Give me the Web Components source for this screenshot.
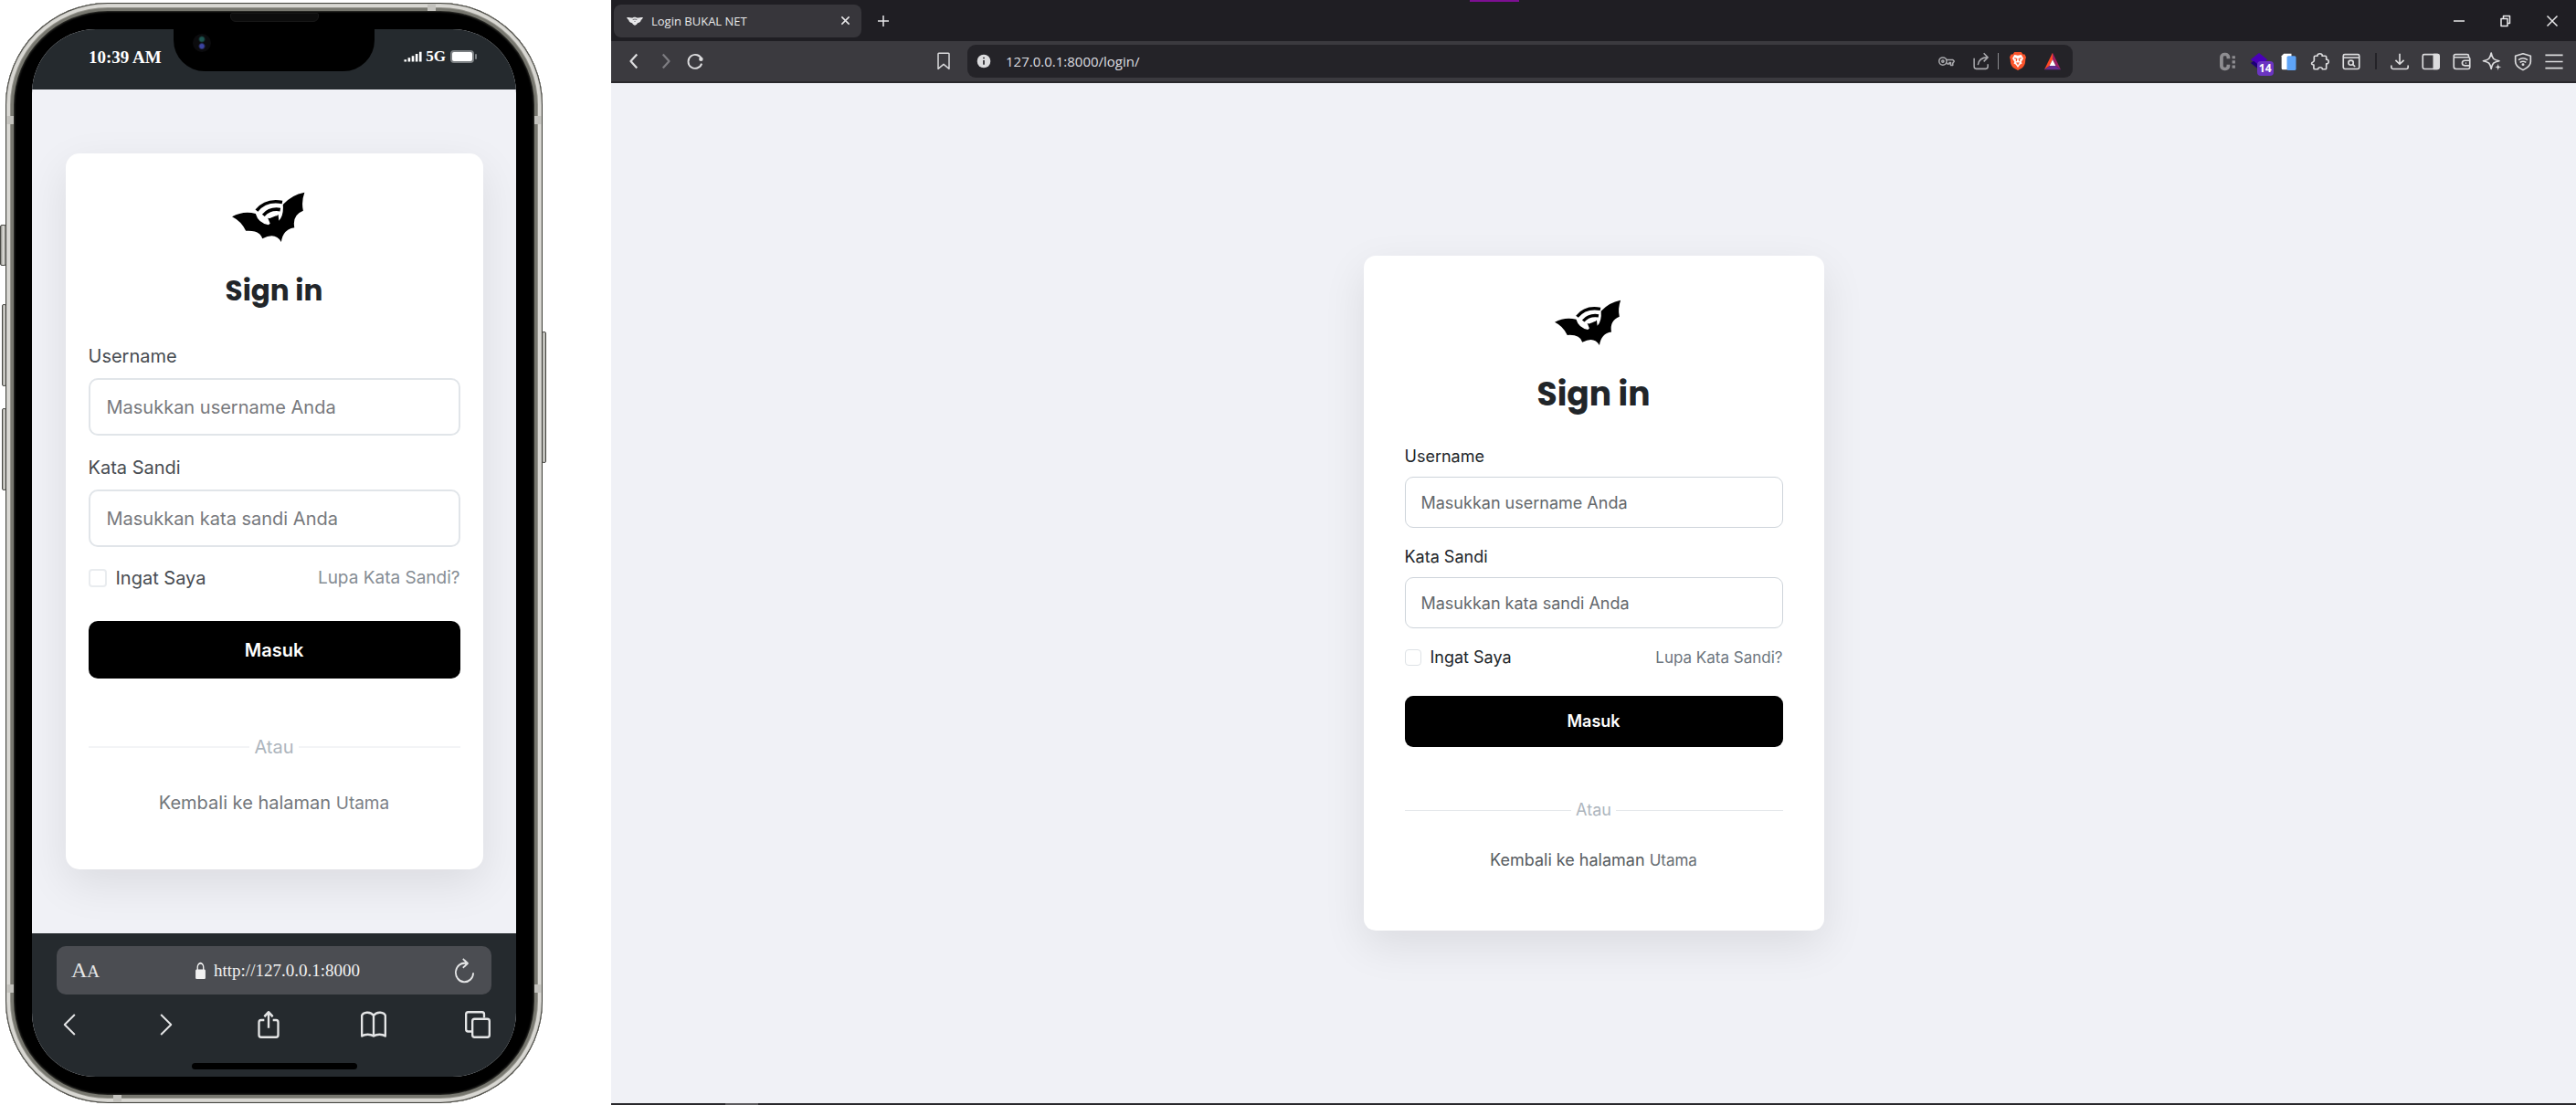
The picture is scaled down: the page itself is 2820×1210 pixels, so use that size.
<!DOCTYPE html>
<html lang="id">
<head>
<meta charset="utf-8">
<title>Login BUKAL NET</title>
<style>
html,body{margin:0;height:100%}
body{background:#fff;font-family:Inter,"Liberation Sans",sans-serif}
</style>
</head>
<body>
<device-showcase>
  <phone-frame slot="phone"><login-card compact></login-card></phone-frame>
  <browser-window slot="desktop"><login-card></login-card></browser-window>
</device-showcase>

<script>
const define = (name, html, after) => {
  const tpl = document.createElement('template');
  tpl.innerHTML = html;
  customElements.define(name, class extends HTMLElement {
    constructor() {
      super();
      this.attachShadow({ mode: 'open' }).append(tpl.content.cloneNode(true));
      if (after) after(this, this.shadowRoot);
    }
  });
};

/* 24-unit line icons, and a few filled ones */
const ICONS = {
  back: '<path d="M15 2 6 12l9 10"/>',
  forward: '<path d="M9 2l9 10-9 10"/>',
  prev: '<path d="M22 1 3 12l19 11" vector-effect="non-scaling-stroke"/>',
  next: '<path d="M2 1l19 11L2 23" vector-effect="non-scaling-stroke"/>',
  reload: '<path d="M21.5 9.5A10 10 0 1 0 21.500 15.500"/><circle cx="20.500" cy="9" r="3" fill="currentColor" stroke="none"/>',
  bookmark: '<path d="M5 1.500h14a1 1 0 0 1 1 1V22l-8-6-8 6V2.500a1 1 0 0 1 1-1z"/>',
  info: '<circle cx="12" cy="12" r="11" fill="currentColor" stroke="none"/><path d="M12 10.500v7M12 5.500v2.500" stroke="#242328" stroke-width="2.500"/>',
  key: '<circle cx="6.500" cy="12" r="5.500"/><circle cx="6.500" cy="12" r="1.500"/><path d="M12 10h9l2 2-2 3v3h-3v-4h-2v2h-3l-1-2"/>',
  share: '<path d="M1.500 8v11a3 3 0 0 0 3 3h14a3 3 0 0 0 3-3v-3M7 17C8 10 13 7 21 7M15.500 1.500 21.500 7 15.500 12.500"/>',
  puzzle: '<path d="M4 5.500C4 4.500 4.500 4 5.500 4H8.500C7.500 0 15.500 0 14.500 4H18.500C19.500 4 20 4.500 20 5.500V9C24 8.500 24 15.500 20 15V21C20 22 19.500 22.500 18.500 22.500H15C14.500 19 9.500 19 9 22.500H5C4 22.500 3.500 22 3.500 21V16.500C-.5 16 .5 13 2.500 12.500 3.500 12 4 11.500 4 10.500z"/>',
  find: '<rect x="1.500" y="2" width="21" height="20" rx="2"/><path d="M2 6.500h20"/><circle cx="11.500" cy="13.500" r="3.200"/><path d="m14 16 3 3"/>',
  download: '<path d="M12 1v14M6.500 10l5.500 5.500 5.500-5.500M1 17v2.500A2.500 2.500 0 0 0 3.500 22h17a2.500 2.500 0 0 0 2.500-2.500V17"/>',
  panel: '<rect x="1.500" y="2" width="21" height="20" rx="2"/><path d="M16 2h5a2 2 0 0 1 2 2v16a2 2 0 0 1-2 2h-5z" fill="currentColor"/>',
  wallet: '<path d="M1.500 6v13a3 3 0 0 0 3 3h16a2 2 0 0 0 2-2V8a2 2 0 0 0-2-2H3a1.500 1.500 0 0 1-1.500-2A2 2 0 0 1 3.500 2H19a2 2 0 0 1 2 2v2M22 10.500h-6a3.500 3.500 0 0 0 0 7h6M17 14h1"/>',
  sparkle: '<path d="M11 0c1.500 8 3 9.500 10.500 11-7.500 1.500-9 3-10.500 11C9.500 14 8 12.500.5 11 8 9.500 9.500 8 11 0z"/><path d="M20 14.500c.5 4 1 4.500 4.500 5-3.500.5-4 1-4.500 5-.5-4-1-4.500-4.500-5 3.500-.5 4-1 4.500-5z" fill="currentColor" stroke="none"/>',
  shield: '<path d="M12 1 22 4v8c0 5-4 8.500-10 11.500C6 20.500 2 17 2 12V4z"/><path d="M6 9.500c4-3 8-3 12 0M8 13c3-2 5-2 8 0"/><circle cx="12" cy="16" r="1.800" fill="currentColor" stroke="none"/>',
  menu: '<path d="M.5 3h23M.5 12h23M.5 21h23"/>',
  minimize: '<path d="M0 12h24"/>',
  restore: '<path d="M2 7h14v16H2zM7 7V1h14v16h-5"/>',
  close: '<path d="M1 1l22 22M23 1 1 23"/>',
  plus: '<path d="M12 0v24M0 12h24"/>',
  tabfav: '<path d="M0 5c4 0 6 1 9 1 0-2 5-2 6 0 3 0 5-1 9-1-1 3-2 4-3 5 0 3-2 5-5 6-1 3-3 4-4 4s-3-1-4-4c-3-1-5-3-5-6-1-1-2-2-3-5z" fill="currentColor" stroke="none"/><path d="M9 10c1-2 5-2 6 0M11 13h2" stroke="#77767c" stroke-width="1.500"/>',
  brave: '<path d="M12 0h5l2.500 3L22 3l2 4-1 3c0 6-2 9-5 11l-6 3-6-3C3 19 1 16 1 10L0 7l2-4 2.500 0L7 0z" fill="#fb542b" stroke="none"/><path d="M12 4.500l5-1 3 5-3 4.500 1 2-3 1.500-3 4-3-4L6 15l1-2-3-4.500 3-5z" fill="#fff" stroke="none"/><path d="M7 8l3.500 1-1 3M17 8l-3.500 1 1 3M10 14l2 1 2-1M12 15v2" stroke="#fb542b" stroke-width="1.500"/>',
  bat: '<path d="M12 1 0 23l7.500-5L12 10z" fill="#ff4724" stroke="none"/><path d="M12 1l12 22-7.500-5L12 10z" fill="#9e1f63" stroke="none"/><path d="M0 23h24l-7.500-5h-9z" fill="#662d91" stroke="none"/><path d="M12 10l4.500 8h-9z" fill="#fff" stroke="none"/>',
  colon: '<path d="M12.500 8V6a4 4 0 0 0-4-4h-1a4 4 0 0 0-4 4v12a4 4 0 0 0 4 4h1a4 4 0 0 0 4-4v-2" stroke-width="4.500"/><path d="M19.500 4v17" stroke-width="4" stroke-dasharray="4 2.500"/>',
  layers: '<path d="M12 0l11 9-11 9L1 9z" fill="#4a00b8" stroke="none"/><path d="M1 14l4-3 7 6v6z" fill="#1d0075" stroke="none"/>',
  copy: '<path d="M5 1h10v22H4a2 2 0 0 1-2-2V4z" fill="#fff" stroke="none"/><rect x="9" y="4" width="12" height="20" rx="2" fill="#5ea4f8" stroke="none"/>',
  signal: '<path d="M1 17.500v4M6.500 14v7.500M12 10.500v11M17.500 7v14.500M23 3v18.500" stroke-width="3.500"/>',
  lock: '<path d="M6 11V7a6 6 0 0 1 12 0v4" stroke-width="2.500"/><rect x="2" y="10" width="20" height="14" rx="2" fill="currentColor" stroke="none"/>',
  again: '<path d="M14 4.500A11 9.500 0 1 0 23 14M10 0l6 4.500L10 9"/>',
  export: '<path d="M8 8H5a2 2 0 0 0-2 2v11a2 2 0 0 0 2 2h14a2 2 0 0 0 2-2V10a2 2 0 0 0-2-2h-3M12 15V1M8 5l4-4 4 4"/>',
  book: '<path d="M12 4C9 0 2 1 1 4v18c3-2 8-2 11 0 3-2 8-2 11 0V4c-1-3-8-4-11 0zM12 4v18"/>',
  tabs: '<rect x="7" y="7" width="16" height="16" rx="2"/><path d="M6 18H3a2 2 0 0 1-2-2V3a2 2 0 0 1 2-2h13a2 2 0 0 1 2 2v3"/>'
};

customElements.define('line-icon', class extends HTMLElement {
  constructor() { super(); this.attachShadow({ mode: 'open' }); }
  connectedCallback() {
    this.shadowRoot.innerHTML = `<style>:host{display:block;flex:none;width:20px;height:20px}svg{display:block;width:100%;height:100%;overflow:visible}</style>
    <svg viewBox="0 0 24 24" preserveAspectRatio="none" fill="none" stroke="currentColor" stroke-width="${this.getAttribute('weight') || 2}" stroke-linejoin="round" aria-hidden="true">${ICONS[this.getAttribute('name')]}</svg>`;
  }
});

define('bat-logo', `
<style>:host{display:block}svg{display:block;height:100%;margin:auto}</style>
<svg viewBox="68 55 215 149" role="img" aria-label="BUKAL NET">
  <path d="M68 129Q102 110 138 120Q146 148 176 153L181 149L174 132Q178 135 182 133Q191 130 197 127Q202 127 205 122L207 141Q222 125 219 93Q245 64 283 57Q273 85 279 111Q246 124 253 161Q219 166 214 204Q197 174 158 194Q150 168 109 171Q95 142 68 129Z"/>
  <path d="M141 111Q168 77 217 86M161 125Q180 103 211 108" fill="none" stroke="#000" stroke-width="10"/>
</svg>`);

define('text-field', `
<style>
:host{display:flex;flex-direction:column;gap:var(--label-gap)}
label{color:var(--label);font-weight:400;font-size:var(--text);line-height:var(--line)}
input{box-sizing:border-box;width:100%;height:var(--control);padding:0 var(--inset);border:var(--edge-width) solid var(--edge);border-radius:var(--control-radius);
  font:400 var(--text)/var(--line) Inter,"Liberation Sans",sans-serif;color:#212529;background:#fff;outline:none}
input::placeholder{color:var(--placeholder);opacity:1}
</style>
<label for="f"></label><input id="f">`, (host, root) => {
  root.querySelector('label').textContent = host.getAttribute('label');
  const i = root.querySelector('input');
  i.type = host.getAttribute('type'); i.placeholder = host.getAttribute('placeholder');
});

define('or-divider', `
<style>
:host{display:flex;align-items:center;gap:5px;color:#adb5bd}
i{flex:1;height:var(--edge-width);background:var(--rule)}
</style><i></i><slot></slot><i></i>`);

define('login-card', `
<style>
:host{
  --text:18px;--line:24px;--link:17px;--title:36px;--title-line:44px;--control:56px;--control-radius:9px;--inset:17px;
  --label-gap:10px;--edge-width:1px;--edge:#ced4da;--rule:#e5e8eb;--label:#212529;--placeholder:#64686c;--muted:#6c757d;--soft:#565b60;--home:#666c72;
  --logo:50px;--pad-x:45px;
  box-sizing:border-box;display:block;width:504px;max-width:100%;background:#fff;border-radius:13px;
  box-shadow:0 16px 48px rgba(0,0,0,.09);padding:48px var(--pad-x) 65px;font-size:var(--text);line-height:var(--line)}
:host([compact]){
  --text:20px;--line:26px;--link:19px;--title:31px;--title-line:38px;--control:63px;--control-radius:10px;--inset:18px;
  --label-gap:11px;--edge-width:2px;--edge:#e1e5e9;--rule:#f3f4f6;--label:#474c51;--placeholder:#77797d;--muted:#868d94;--soft:#72767a;--home:#7b8086;
  --logo:55px;--pad-x:25px;
  width:457px;border-radius:15px;padding-top:42px;padding-bottom:59px}
bat-logo{height:var(--logo);margin-right:12px}
h1{margin:32px 0 34px;font:700 var(--title)/var(--title-line) Poppins,Inter,sans-serif;color:#212529;text-align:center}
form,.stack{display:flex;flex-direction:column}
.stack{gap:20px}
.row{display:flex;justify-content:space-between;align-items:center;margin:20px 0 30px}
.row label{display:flex;align-items:center;gap:10px;color:var(--label)}
input{appearance:none;box-sizing:border-box;width:18px;height:18px;margin:0;border:var(--edge-width) solid #dee2e6;border-radius:4px;background:#fff}
a{color:var(--muted);font-size:var(--link);text-decoration:none}
button{height:var(--control);border:0;border-radius:var(--control-radius);background:#000;color:#fff;font:600 var(--text)/var(--line) Inter,sans-serif}
or-divider{margin:57px 0 31px}
p{margin:0;text-align:center;color:var(--soft)}
p a{color:var(--home)}
:host([compact]) h1{margin:34px 0 40px}
:host([compact]) .stack{gap:22px}
:host([compact]) .row{margin:21px 0 34px}
:host([compact]) input{width:20px;height:20px;border-color:#e9ecef}
:host([compact]) or-divider{margin:62px 0 35px}
</style>
<bat-logo></bat-logo>
<h1>Sign in</h1>
<form>
  <div class="stack">
    <text-field label="Username" type="text" placeholder="Masukkan username Anda"></text-field>
    <text-field label="Kata Sandi" type="password" placeholder="Masukkan kata sandi Anda"></text-field>
  </div>
  <div class="row">
    <label for="remember"><input type="checkbox" id="remember">Ingat Saya</label>
    <a href="#lupa">Lupa Kata Sandi?</a>
  </div>
  <button type="button">Masuk</button>
</form>
<or-divider>Atau</or-divider>
<p>Kembali ke halaman <a href="#utama">Utama</a></p>`);

define('phone-frame', `
<style>
:host{display:flex;position:relative;box-sizing:border-box;width:588px;height:calc(100vh - 5px);margin:3px 0 0 6px;padding:29px;
  border-radius:112px;background:#000;
  box-shadow:inset 0 0 0 1px #45453f,inset 0 0 0 2px #c9c8c4,inset 0 0 0 5px #d9d8d3,inset 0 0 0 6px #96958e,inset 0 0 0 9px #77776f,inset 0 0 2px 10px #33332f}
.screen{flex:1;display:flex;flex-direction:column;border-radius:70px;overflow:hidden;background:#f0f1f6;font-family:"Liberation Serif",serif;color:#fff}
.status{flex:none;box-sizing:border-box;height:66px;display:flex;justify-content:space-between;padding:20px 43px 0 62px;background:#252a2e;font-weight:700;font-size:19px;line-height:22px}
.net{display:flex;align-items:center;gap:5px;height:20px;font-size:17px}
.net line-icon{width:18px;height:14px}
.battery{display:flex;align-items:center;gap:1px}
.battery::before{content:"";width:22px;height:10px;border:2px solid #7c8083;border-radius:4px;background:#fff}
.battery::after{content:"";width:2px;height:6px;background:#7c8083;border-radius:2px}
main{flex:1;display:flex;align-items:center;justify-content:center;font-family:Inter,sans-serif}
footer{flex:none;box-sizing:border-box;height:157px;padding:14px 27px 8px;background:#252a2e;display:flex;flex-direction:column;align-items:center}
.url{box-sizing:border-box;width:100%;height:53px;display:flex;align-items:center;justify-content:space-between;padding:0 19px 0 16px;border-radius:10px;background:#4b4d52}
button{border:0;padding:0;background:none;color:#e4e5e6;font:24px/26px "Liberation Serif",serif}
small{font-size:19px}
.url label{display:flex;align-items:center;gap:8px;color:#f1f1f1}
.url label line-icon{width:13px;height:18px}
.url input{width:160px;border:0;padding:0;background:none;color:#f1f1f1;font:19px/24px "Liberation Serif",serif}
.url button line-icon{width:21px;height:26px}
nav{box-sizing:border-box;width:100%;display:flex;justify-content:space-between;align-items:center;padding:18px 1px 0 7px}
nav line-icon{width:28px;height:30px}
nav .arrow{width:19px}
nav .arrow line-icon{width:14px;height:24px}
.home{margin-top:auto;width:181px;height:7px;border-radius:4px;background:#000}
.notch{position:absolute;left:184px;top:28px;width:220px;height:47px;border-radius:0 0 34px 34px;background:#000}
.camera{position:absolute;left:21px;top:6px;width:20px;height:20px;border-radius:50%;background:radial-gradient(circle at 50% 68%,#3b43a0 0 2px,transparent 4px),radial-gradient(circle at 50% 30%,#1d5550 0 2px,transparent 4px),#0b0b0d}
.speaker{position:absolute;left:246px;top:11px;width:95px;height:8px;border:1px solid #171717;border-radius:2px 2px 6px 6px;background:#0c0c0c}
.key{position:absolute;box-sizing:border-box;border:1px solid #4b4b46;background:linear-gradient(90deg,#8b8b85,#e0dfdb 50%,#8b8b85);border-radius:2px}
.mute{left:-6px;top:243px;width:7px;height:45px}
.up{left:-4px;top:330px;width:5px;height:90px}
.down{left:-4px;top:444px;width:5px;height:90px}
.power{right:-4px;top:360px;width:5px;height:144px}
.band{position:absolute;background:#c3c2bd}
.l1,.l2,.r1,.r2{width:8px;height:9px}.l1,.l2{left:1px}.r1,.r2{right:1px}.l1,.r1{top:124px}.l2,.r2{bottom:121px}
.t,.b{width:9px;height:8px}.t{left:462px;top:1px}.b{left:118px;bottom:1px}
</style>
<div class="screen">
  <div class="status"><span>10:39 AM</span><span class="net"><line-icon name="signal"></line-icon>5G<span class="battery"></span></span></div>
  <main><slot></slot></main>
  <footer>
    <div class="url">
      <button type="button" aria-label="Ukuran teks">A<small>A</small></button>
      <label for="address"><line-icon name="lock"></line-icon><input id="address" type="text" value="http://127.0.0.1:8000"></label>
      <button type="button" aria-label="Muat ulang"><line-icon name="again"></line-icon></button>
    </div>
    <nav>
      <button type="button" class="arrow" aria-label="Mundur"><line-icon name="prev"></line-icon></button>
      <button type="button" class="arrow" aria-label="Maju"><line-icon name="next"></line-icon></button>
      <button type="button" aria-label="Bagikan"><line-icon name="export"></line-icon></button>
      <button type="button" aria-label="Penanda"><line-icon name="book"></line-icon></button>
      <button type="button" aria-label="Tab"><line-icon name="tabs"></line-icon></button>
    </nav>
    <div class="home"></div>
  </footer>
</div>
<div class="notch"><div class="camera"></div></div>
<div class="speaker"></div>
<div class="key mute"></div><div class="key up"></div><div class="key down"></div><div class="key power"></div>
<div class="band l1"></div><div class="band l2"></div><div class="band r1"></div><div class="band r2"></div><div class="band t"></div><div class="band b"></div>`);

define('browser-window', `
<style>
:host{display:flex;flex-direction:column;position:relative;height:100%;box-sizing:border-box;background:#f0f1f6;color:#e8e8ea;font-family:"Open Sans","Noto Sans",sans-serif;border-bottom:2px solid #29282c}
:host::after{content:"";position:absolute;left:125px;bottom:-2px;width:36px;height:2px;background:#5c5b5e}
button{display:block;border:0;padding:0;background:none;color:inherit}
.strip{flex:none;position:relative;display:flex;align-items:center;height:45px;padding:0 20px 0 3px;background:#1f1e23}
.strip::before{content:"";position:absolute;top:0;left:940px;width:54px;height:2px;background:#7d0f92}
.tab{box-sizing:border-box;display:flex;align-items:center;width:271px;height:36px;padding:0 13px 0 14px;border-radius:8px;background:#37363b;font-size:13px;line-height:18px}
.tab line-icon{width:18px;height:14px}
.tab span{flex:1;margin-left:9px}
.tab button line-icon{width:9px;height:9px}
.new{margin-left:18px}
.new line-icon{width:12px;height:12px}
.controls{margin-left:auto;display:flex;gap:39px}
.controls line-icon{width:12px;height:12px}
.bar{flex:none;box-sizing:border-box;display:flex;align-items:center;height:46px;padding:0 14px 0 17px;background:#3b3a3f;border-bottom:2px solid #29282c;color:#dcdcde}
.nav{display:flex;align-items:center;gap:15px}
.nav line-icon{height:18px;width:18px}
.off{color:#7d7c81}
.mark{margin-left:254px}
.mark line-icon{width:18px;height:20px}
.url{box-sizing:border-box;flex:0 1 1210px;display:flex;align-items:center;height:36px;margin-left:17px;padding:0 13px 0 10px;border-radius:9px;background:#242328}
.url>line-icon{width:16px;height:16px;color:#dcdcde}
.url input{flex:1;min-width:0;margin-left:16px;border:0;padding:0;background:none;color:#dedee1;font:15px/20px "Open Sans","Noto Sans",sans-serif}
.inside{display:flex;align-items:center;gap:20px;color:#a9a9ad}
.inside line-icon{width:18px}
.inside .keyicon{height:18px}
.inside .rule{width:1px;height:18px;background:#8b8b8f;margin:0 -8px 0 -11px}
.tools{margin-left:auto;width:377px;display:flex;align-items:center;justify-content:space-between}
.tools .rule{width:2px;height:18px;background:#242328;margin:0 2px}
.tools .dim{color:#8e8d91}
.tools line-icon{height:19px}
.badged{position:relative}
.badged span{position:absolute;left:8px;top:9px;width:18px;height:16px;border-radius:4px;background:#6b35c2;color:#fff;font:700 12px/16px "Open Sans",sans-serif;text-align:center}
main{flex:1;display:flex;align-items:center;justify-content:center;font-family:Inter,sans-serif}
</style>
<div class="strip">
  <div class="tab"><line-icon name="tabfav"></line-icon><span>Login BUKAL NET</span><button type="button" aria-label="Tutup tab"><line-icon name="close" weight="4"></line-icon></button></div>
  <button type="button" class="new" aria-label="Tab baru"><line-icon name="plus" weight="3"></line-icon></button>
  <div class="controls">
    <button type="button" aria-label="Kecilkan"><line-icon name="minimize" weight="3"></line-icon></button>
    <button type="button" aria-label="Pulihkan"><line-icon name="restore" weight="3"></line-icon></button>
    <button type="button" aria-label="Tutup"><line-icon name="close" weight="3"></line-icon></button>
  </div>
</div>
<div class="bar">
  <div class="nav">
    <button type="button" aria-label="Mundur"><line-icon name="back" weight="3"></line-icon></button>
    <button type="button" class="off" aria-label="Maju"><line-icon name="forward" weight="3"></line-icon></button>
    <button type="button" aria-label="Muat ulang"><line-icon name="reload" weight="2.5"></line-icon></button>
  </div>
  <button type="button" class="mark" aria-label="Penanda"><line-icon name="bookmark"></line-icon></button>
  <div class="url">
    <line-icon name="info"></line-icon>
    <input type="text" aria-label="Alamat" value="127.0.0.1:8000/login/">
    <div class="inside">
      <line-icon class="keyicon" name="key"></line-icon><line-icon name="share"></line-icon><div class="rule"></div>
      <line-icon name="brave"></line-icon><line-icon name="bat"></line-icon>
    </div>
  </div>
  <div class="tools">
    <line-icon class="dim" name="colon"></line-icon>
    <div class="badged"><line-icon name="layers"></line-icon><span>14</span></div>
    <line-icon name="copy"></line-icon><line-icon name="puzzle"></line-icon><line-icon name="find"></line-icon>
    <div class="rule"></div>
    <line-icon name="download"></line-icon><line-icon name="panel"></line-icon><line-icon name="wallet"></line-icon>
    <line-icon name="sparkle"></line-icon><line-icon name="shield"></line-icon>
    <button type="button" aria-label="Menu"><line-icon name="menu"></line-icon></button>
  </div>
</div>
<main><slot></slot></main>`);

define('device-showcase', `
<style>
:host{display:grid;grid-template-columns:669px minmax(0,1fr);height:100vh}
</style>
<slot name="phone"></slot><slot name="desktop"></slot>`);
</script>
</body>
</html>
